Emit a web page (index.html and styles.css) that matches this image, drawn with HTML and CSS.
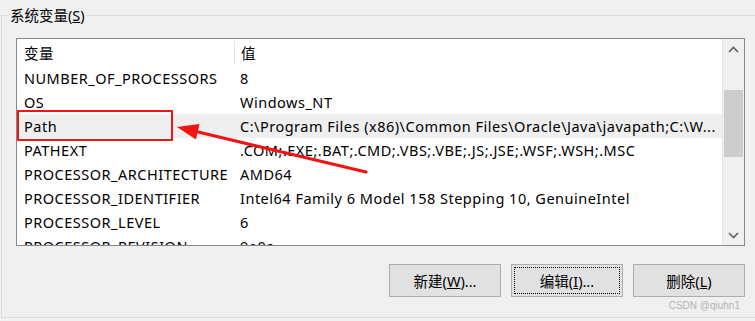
FILE: index.html
```html
<!DOCTYPE html>
<html lang="zh-CN">
<head>
    <meta charset="UTF-8">
    <title>系统变量</title>
    <link rel="stylesheet" href="styles.css">
</head>
<body>
    <div class="group">
        <div class="group-title">系统变量(<u>S</u>)</div>

        <div class="listbox">
            <div class="list">
                <div class="row header">
                    <div class="cell name">变量</div>
                    <div class="cell value">值</div>
                </div>
                <div class="row"><div class="cell name">NUMBER_OF_PROCESSORS</div><div class="cell value">8</div></div>
                <div class="row"><div class="cell name">OS</div><div class="cell value">Windows_NT</div></div>
                <div class="row selected"><div class="cell name">Path</div><div class="cell value">C:\Program Files (x86)\Common Files\Oracle\Java\javapath;C:\W...</div></div>
                <div class="row"><div class="cell name">PATHEXT</div><div class="cell value">.COM;.EXE;.BAT;.CMD;.VBS;.VBE;.JS;.JSE;.WSF;.WSH;.MSC</div></div>
                <div class="row"><div class="cell name">PROCESSOR_ARCHITECTURE</div><div class="cell value">AMD64</div></div>
                <div class="row"><div class="cell name">PROCESSOR_IDENTIFIER</div><div class="cell value">Intel64 Family 6 Model 158 Stepping 10, GenuineIntel</div></div>
                <div class="row"><div class="cell name">PROCESSOR_LEVEL</div><div class="cell value">6</div></div>
                <div class="row"><div class="cell name">PROCESSOR_REVISION</div><div class="cell value">9e0a</div></div>
            </div>
            <div class="scrollbar">
                <div class="scroll-btn">
                    <svg width="11" height="7" viewBox="0 0 11 7"><path d="M1 6 L5.5 1.5 L10 6" fill="none" stroke="#606060" stroke-width="1.6"/></svg>
                </div>
                <div class="scroll-track">
                    <div class="scroll-thumb"></div>
                </div>
                <div class="scroll-btn">
                    <svg width="11" height="7" viewBox="0 0 11 7"><path d="M1 1 L5.5 5.5 L10 1" fill="none" stroke="#606060" stroke-width="1.6"/></svg>
                </div>
            </div>
        </div>

        <div class="actions">
            <button class="btn">新建(<u>W</u>)...</button>
            <button class="btn btn-focus">编辑(<u>I</u>)...</button>
            <button class="btn">删除(<u>L</u>)</button>
        </div>
    </div>

    <!-- 标注 -->
    <div class="mark-box"></div>
    <svg class="mark-arrow" width="755" height="321" viewBox="0 0 755 321">
        <line x1="366" y1="172" x2="194" y2="131" stroke="#f01414" stroke-width="3.2" stroke-linecap="round"/>
        <polygon points="177,127 199.5,124 196,139.5" fill="#f01414"/>
    </svg>
    <div class="watermark">CSDN @qiuhn1</div>
</body>
</html>
```

FILE: styles.css
```css
body {
    margin: 0;
    width: 755px;
    height: 321px;
    overflow: hidden;
    background-color: #f0f0f0;
    font-family: "Noto Sans", "Noto Sans CJK SC", sans-serif;
    font-size: 14.5px;
    color: #000;
    position: relative;
}
.group {
    position: relative;
    margin: 15px 0 0 1px;
    width: 753px;
    height: 301px;
    border: 1px solid #dcdcdc;
    border-right: none;
}
.group-title {
    position: absolute;
    top: -10px;
    left: 6px;
    padding: 0 2px;
    background-color: #f0f0f0;
    line-height: 18px;
}
.listbox {
    display: flex;
    margin: 22px 0 0 14px;
    width: 727px;
    height: 206px;
    border: 1px solid #828790;
    background-color: #fff;
    overflow: hidden;
}
.list {
    flex: 1;
    border-right: 1px solid #e5e5e5;
}
.row {
    display: flex;
    height: 24px;
    line-height: 24px;
    white-space: nowrap;
}
.row.header {
    padding-top: 2px;
    margin-bottom: 1px;
}
.header .name {
    border-right: 1px solid #e5e5e5;
}
.row.selected {
    background-color: #efefef;
}
.cell {
    overflow: hidden;
    letter-spacing: 0.5px;
}
.name {
    width: 210px;
    padding-left: 7px;
}
.value {
    flex: 1;
    padding-left: 6px;
}
.scrollbar {
    width: 21px;
    display: flex;
    flex-direction: column;
    background-color: #f0f0f0;
}
.scroll-btn {
    height: 20px;
    display: flex;
    align-items: center;
    justify-content: center;
}
.scroll-track {
    flex: 1;
    padding-top: 31px;
}
.scroll-thumb {
    margin: 0 1px;
    height: 67px;
    background-color: #cdcdcd;
}
.actions {
    display: flex;
    justify-content: flex-end;
    gap: 10px;
    width: 743px;
    margin-top: 18px;
}
.btn {
    width: 112px;
    height: 33px;
    border: 1px solid #adadad;
    background-color: #e1e1e1;
    font-family: inherit;
    font-size: 14.5px;
    color: #000;
    padding: 0;
}
.btn-focus {
    outline: 1px dotted #000;
    outline-offset: -4px;
}
.mark-box {
    position: absolute;
    left: 17px;
    top: 110px;
    width: 152px;
    height: 27px;
    border: 2px solid #f01414;
}
.mark-arrow {
    position: absolute;
    left: 0;
    top: 0;
}
.watermark {
    position: absolute;
    right: 15px;
    top: 300px;
    font-family: "Liberation Sans", sans-serif;
    font-size: 10px;
    color: #b4b4b4;
}
```
